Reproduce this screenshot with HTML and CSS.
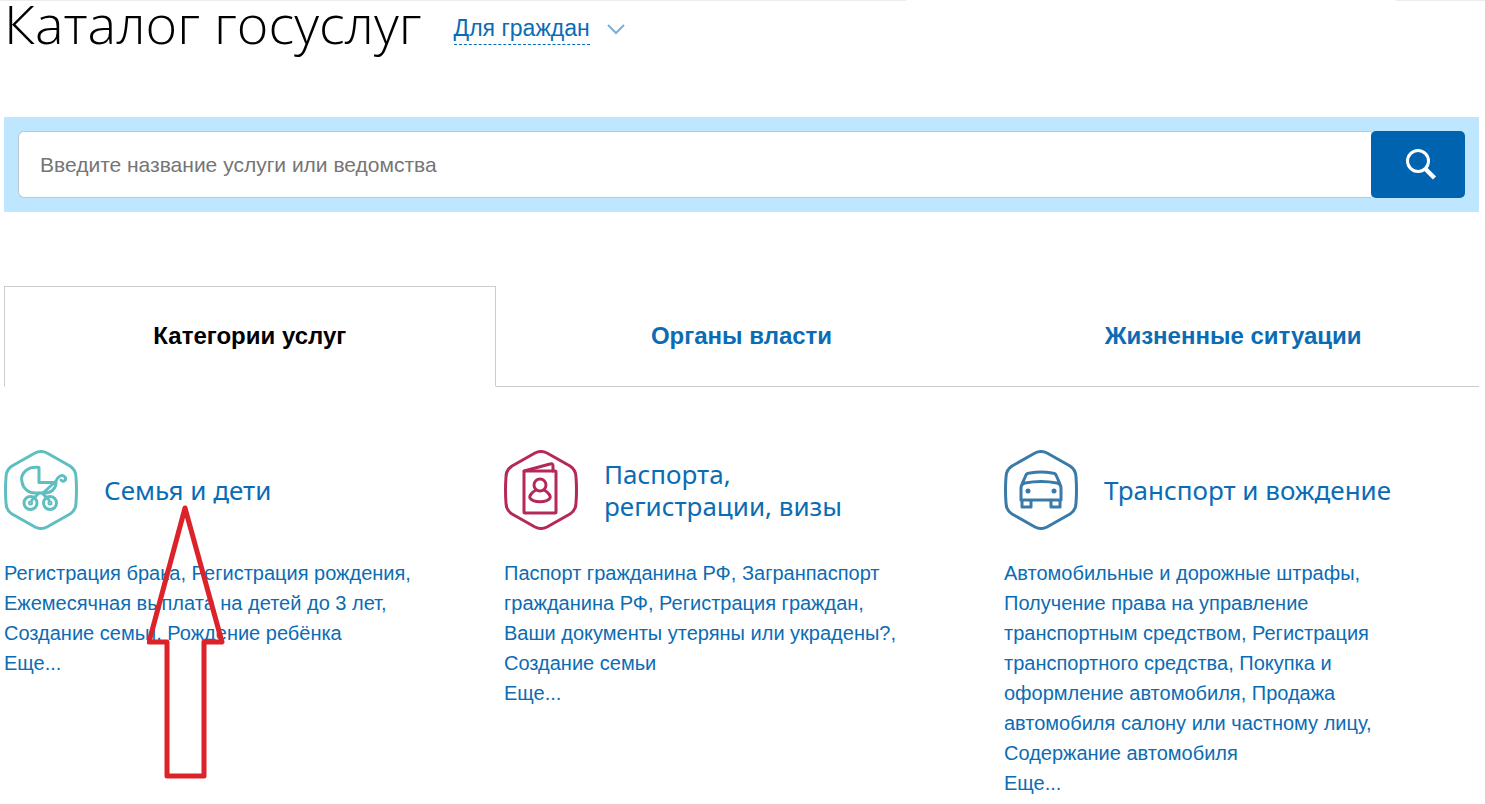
FILE: index.html
```html
<!DOCTYPE html>
<html lang="ru">
<head>
<meta charset="utf-8">
<title>Каталог госуслуг</title>
<link rel="stylesheet" href="styles.css">
</head>
<body>
<div class="edge"><span class="edge-left"></span><span class="edge-right"></span></div>
<div class="page">
  <header class="header">
    <h1 class="title">Каталог госуслуг</h1>
    <button class="audience" type="button">
      <span class="audience-label">Для граждан</span>
      <svg class="chevron" width="20" height="14" viewBox="0 0 20 14" aria-hidden="true"><path d="M2 3l8 8 8-8"/></svg>
    </button>
  </header>

  <form class="search" role="search">
    <input class="search-input" type="text" aria-label="Поиск" placeholder="Введите название услуги или ведомства">
    <button class="search-button" type="submit" aria-label="Найти">
      <svg width="34" height="34" viewBox="0 0 34 34" aria-hidden="true"><circle cx="14" cy="13" r="10.500" stroke-width="3"/><path d="M21 20.500l9.500 9.500" stroke-width="4.500"/></svg>
    </button>
  </form>

  <nav class="tabs">
    <a class="tab tab-active" href="#categories">Категории услуг</a>
    <a class="tab" href="#authorities">Органы власти</a>
    <a class="tab" href="#situations">Жизненные ситуации</a>
  </nav>

  <main class="categories" id="categories">
    <section class="category">
      <div class="category-head">
        <svg class="icon icon-family" width="74" height="80" viewBox="0 0 74 80" aria-hidden="true">
          <path class="hex" d="M31 3Q37 0 43 3L66 16Q72 20 72 27Q73 40 72 53Q72 60 66 64L43 77Q37 80 31 77L8 64Q2 60 2 53Q1 40 2 27Q2 20 8 16Z"/>
          <path d="M35 17.500C23 16 16 24 18 32C19 39 25 43 31 43H41C47 43 52 39 52 32.500H35Z"/>
          <path d="M39 43L52 31C54 26 58 24 61 27C63 30 59 33 57 30M28 50L35 43M45 50L38 43"/>
          <circle cx="26.500" cy="53" r="6.500"/><circle cx="46" cy="53" r="6.500"/><circle cx="26.500" cy="53" r="1"/><circle cx="46" cy="53" r="1"/>
        </svg>
        <h2 class="category-title"><a href="#family">Семья и дети</a></h2>
      </div>
      <p class="links"><a href="#l1">Регистрация брака</a>, <a href="#l2">Регистрация рождения</a>, <a href="#l3">Ежемесячная выплата на детей до 3 лет</a>, <a href="#l4">Создание семьи</a>, <a href="#l5">Рождение ребёнка</a></p>
      <a class="more" href="#family">Еще...</a>
      <svg class="arrow" width="78" height="276" viewBox="0 0 78 276" aria-hidden="true"><path d="M38 4L75 138H57V272H20V138H2Z"/></svg>
    </section>

    <section class="category">
      <div class="category-head">
        <svg class="icon icon-passport" width="74" height="80" viewBox="0 0 74 80" aria-hidden="true">
          <path class="hex" d="M31 3Q37 0 43 3L66 16Q72 20 72 27Q73 40 72 53Q72 60 66 64L43 77Q37 80 31 77L8 64Q2 60 2 53Q1 40 2 27Q2 20 8 16Z"/>
          <rect x="20" y="21" width="32" height="42" rx="1"/>
          <path d="M20 21L46 14Q49 13 49 16V21"/>
          <circle cx="36" cy="35" r="6"/>
          <path d="M32 40C28 42 25 46 26 48C29 53 43 53 46 48C47 46 44 42 40 40"/>
        </svg>
        <h2 class="category-title"><a href="#passports">Паспорта, регистрации, визы</a></h2>
      </div>
      <p class="links"><a href="#l6">Паспорт гражданина РФ</a>, <a href="#l7">Загранпаспорт гражданина РФ</a>, <a href="#l8">Регистрация граждан</a>, <a href="#l9">Ваши документы утеряны или украдены?</a>, <a href="#l10">Создание семьи</a></p>
      <a class="more" href="#passports">Еще...</a>
    </section>

    <section class="category">
      <div class="category-head">
        <svg class="icon icon-car" width="74" height="80" viewBox="0 0 74 80" aria-hidden="true">
          <path class="hex" d="M31 3Q37 0 43 3L66 16Q72 20 72 27Q73 40 72 53Q72 60 66 64L43 77Q37 80 31 77L8 64Q2 60 2 53Q1 40 2 27Q2 20 8 16Z"/>
          <path d="M18 34L22 25Q23 23 26 23Q37 21 48 23Q51 23 52 25L56 34M17 50V38Q17 34 21 33Q37 30 53 33Q57 34 57 38V50ZM18 50V57H27V50M47 50V57H56V50"/>
          <circle class="lamp" cx="24" cy="41" r="2.500"/><circle class="lamp" cx="50" cy="41" r="2.500"/>
        </svg>
        <h2 class="category-title"><a href="#transport">Транспорт и вождение</a></h2>
      </div>
      <p class="links"><a href="#l11">Автомобильные и дорожные штрафы</a>, <a href="#l12">Получение права на управление транспортным средством</a>, <a href="#l13">Регистрация транспортного средства</a>, <a href="#l14">Покупка и оформление автомобиля</a>, <a href="#l15">Продажа автомобиля салону или частному лицу</a>, <a href="#l16">Содержание автомобиля</a></p>
      <a class="more" href="#transport">Еще...</a>
    </section>
  </main>
</div>
</body>
</html>
```

FILE: styles.css
```css
* { box-sizing: border-box; }
body {
  margin: 0;
  background: #fff;
  color: #0b6cb4;
  font-family: "Liberation Sans", Arial, sans-serif;
}
a { color: inherit; text-decoration: none; }
button { font: inherit; border: 0; cursor: pointer; }
svg { fill: none; stroke: currentColor; }

.edge { display: flex; justify-content: space-between; height: 1px; }
.edge-left { width: 61%; background: #ececec; }
.edge-right { width: 6%; background: #ececec; }

.page { padding: 0 6px 16px 4px; }

.header { display: flex; align-items: flex-start; gap: 32px; height: 116px; }
.title {
  margin: 0;
  color: #000;
  font-family: "Open Sans", "Noto Sans", sans-serif;
  font-weight: 300;
  font-size: 54px;
  line-height: 44px;
}
.audience {
  display: flex;
  align-items: center;
  gap: 16px;
  padding: 11px 0 0;
  background: none;
  color: #0b6cb4;
  font-size: 23px;
  line-height: 30px;
}
.audience-label { border-bottom: 1px dashed #0b6cb4; line-height: 32px; }
.chevron { color: #79b0d8; stroke-width: 2; }

.search { display: flex; padding: 14px; background: #bfe6ff; }
.search-input {
  flex: 1;
  min-width: 0;
  height: 67px;
  padding: 0 21px;
  border: 1px solid #bcc8d0;
  border-right: 0;
  border-radius: 6px 0 0 6px;
  font: 21px "Liberation Sans", Arial, sans-serif;
}
.search-input::placeholder { color: #757575; opacity: 1; }
.search-button {
  display: flex;
  align-items: center;
  justify-content: center;
  width: 94px;
  padding: 0 0 0 6px;
  border-radius: 5px;
  background: #0063b0;
  color: #fff;
}

.tabs { display: grid; grid-template-columns: repeat(3, 1fr); margin-top: 74px; }
.tab {
  padding: 35px 0;
  border-bottom: 1px solid #ccc;
  font-size: 24px;
  font-weight: bold;
  line-height: 30px;
  text-align: center;
}
.tab-active { border: 1px solid #ccc; border-bottom-color: transparent; color: #000; padding-top: 34px; }

.categories {
  display: grid;
  grid-template-columns: repeat(3, 1fr);
  gap: 25px;
  margin-top: 63px;
  font-size: 20px;
  line-height: 30px;
}
.category { position: relative; }
.category-head { display: flex; align-items: center; gap: 26px; height: 80px; }
.icon { flex: none; stroke-width: 3; stroke-linejoin: round; stroke-linecap: round; }
.icon-family { color: #5fbfc0; }
.icon-passport { color: #b5285a; }
.icon-car { color: #397aa8; }
.lamp { fill: currentColor; stroke: none; }
.category-title {
  max-width: 300px;
  margin: 0;
  font-family: "Noto Sans", "Open Sans", sans-serif;
  font-size: 26px;
  font-weight: 400;
  line-height: 32px;
}
.links { margin: 28px 0 0; padding-right: 65px; }
.more { display: block; }
.arrow { position: absolute; top: 54px; left: 143px; color: #dc2329; stroke-width: 5; stroke-linejoin: round; }
```
